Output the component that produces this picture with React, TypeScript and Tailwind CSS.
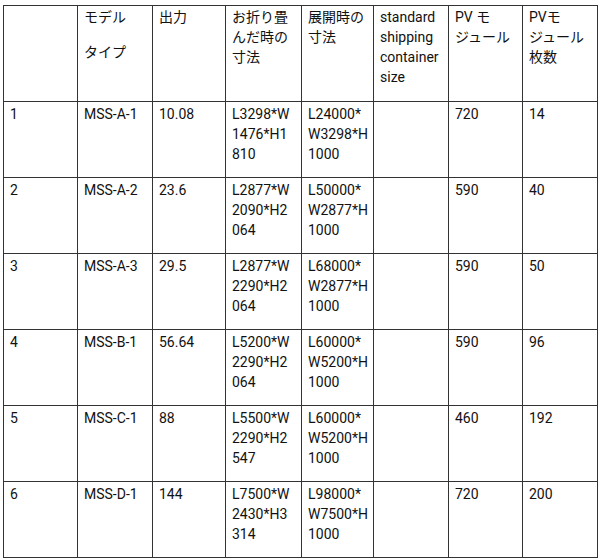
const header = [
  [""],
  ["モデル", "", "タイプ"],
  ["出力"],
  ["お折り畳", "んだ時の", "寸法"],
  ["展開時の", "寸法"],
  ["standard", "shipping", "container", "size"],
  ["PV モ", "ジュール"],
  ["PVモ", "ジュール", "枚数"],
];

const rows = [
  ["1", "MSS-A-1", "10.08", "L3298*W|1476*H1|810", "L24000*|W3298*H|1000", "", "720", "14"],
  ["2", "MSS-A-2", "23.6", "L2877*W|2090*H2|064", "L50000*|W2877*H|1000", "", "590", "40"],
  ["3", "MSS-A-3", "29.5", "L2877*W|2290*H2|064", "L68000*|W2877*H|1000", "", "590", "50"],
  ["4", "MSS-B-1", "56.64", "L5200*W|2290*H2|064", "L60000*|W5200*H|1000", "", "590", "96"],
  ["5", "MSS-C-1", "88", "L5500*W|2290*H2|547", "L60000*|W5200*H|1000", "", "460", "192"],
  ["6", "MSS-D-1", "144", "L7500*W|2430*H3|314", "L98000*|W7500*H|1000", "", "720", "200"],
];

const widths = [74, 75, 73, 76, 72, 75, 74, 75];

export default function App() {
  return (
    <div
      className="bg-white w-[600px] h-[559px] pt-[5px] pl-[3px] text-[14px] leading-[20px] text-[#111]"
      style={{ fontFamily: 'Roboto, "Noto Sans CJK JP", sans-serif' }}
    >
      <table className="table-fixed border-collapse w-[595px]">
        <colgroup>
          {widths.map((w, i) => (
            <col key={i} style={{ width: w }} />
          ))}
        </colgroup>
        <tbody>
          <tr className="h-[96px]">
            {header.map((lines, i) => (
              <td key={i} className="border border-[#333] align-top px-[6px] pt-[1px]">
                {lines.map((l, j) =>
                  l === "" && lines.length > 1 ? (
                    <div key={j} className="h-[15px]" />
                  ) : (
                    <div key={j} className="whitespace-nowrap">{l}</div>
                  )
                )}
              </td>
            ))}
          </tr>
          {rows.map((r) => (
            <tr key={r[0]} className="h-[76px]">
              {r.map((c, i) => (
                <td key={i} className="border border-[#333] align-top px-[6px] pt-[2px]">
                  {c.split("|").map((l, j) => (
                    <div key={j} className="whitespace-nowrap">{l}</div>
                  ))}
                </td>
              ))}
            </tr>
          ))}
        </tbody>
      </table>
    </div>
  );
}
